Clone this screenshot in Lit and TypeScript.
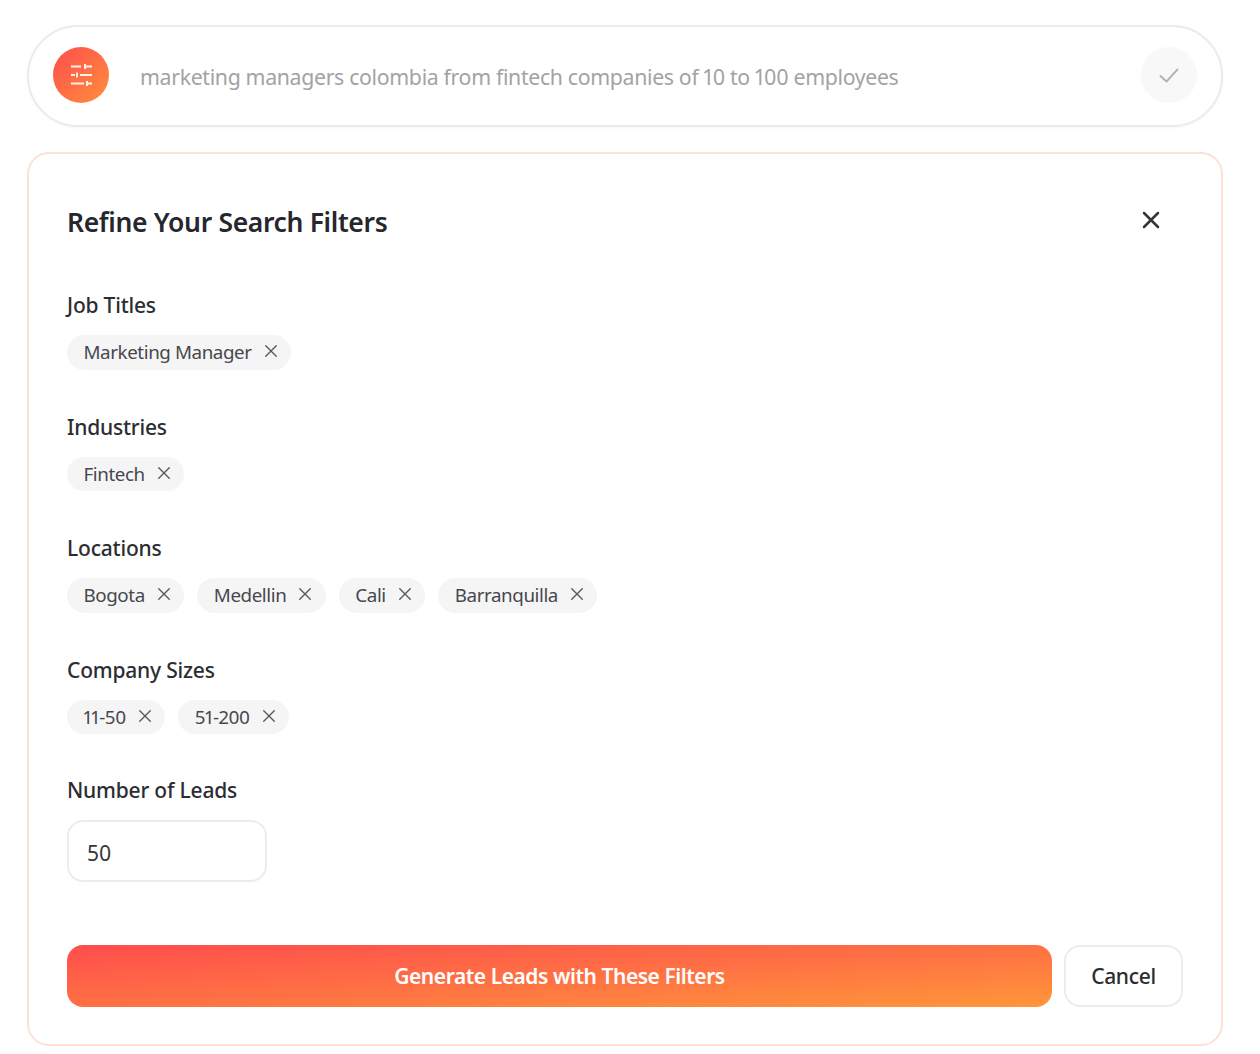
import { LitElement, html, css, svg } from "lit";
import { customElement } from "lit/decorators.js";

const xIcon = (size: number, sw: number) => html`<svg class="x" width=${size} height=${size} viewBox="0 0 24 24" fill="none" stroke="currentColor" stroke-width=${sw} stroke-linecap="round"><path d="M5 5L19 19M19 5L5 19"/></svg>`;

const sections: { label: string; chips: string[] }[] = [
  { label: "Job Titles", chips: ["Marketing Manager"] },
  { label: "Industries", chips: ["Fintech"] },
  { label: "Locations", chips: ["Bogota", "Medellin", "Cali", "Barranquilla"] },
  { label: "Company Sizes", chips: ["11-50", "51-200"] },
];

@customElement("app-root")
export class AppRoot extends LitElement {
  static styles = css`
    :host { display: block; width: 1260px; height: 1054px; background: #fff; overflow: hidden; font-family: "Noto Sans", "Open Sans", sans-serif; font-feature-settings: "pnum"; box-sizing: border-box; padding: 25px 37px 0 27px; color: #2b2d33; }
    * { box-sizing: border-box; }
    .search { height: 102px; border: 2px solid #ebebeb; border-radius: 51px; display: flex; align-items: center; padding: 0 24px 2px; box-shadow: 0 1px 3px rgba(0,0,0,.04); }
    .logo { width: 56px; height: 56px; border-radius: 50%; background: linear-gradient(135deg, #ff4d4d, #ff8f3c); display: flex; align-items: center; justify-content: center; flex: none; }
    .query { flex: 1; margin: 2px 0 0 31px; font-size: 21.3px; letter-spacing: -.34px; color: #a3a3a3; white-space: nowrap; }
    .check { width: 56px; height: 56px; border-radius: 50%; background: #f8f8f8; display: flex; align-items: center; justify-content: center; color: #b4b4b4; flex: none; }
    .card { margin-top: 25px; height: 894px; border: 2px solid #fde0d8; border-radius: 22px; padding: 38px 38px 0; display: flex; flex-direction: column; }
    .head { display: flex; justify-content: space-between; align-items: center; height: 60px; margin-bottom: 38px; }
    h2 { margin: 0; font-size: 26.5px; font-weight: 600; letter-spacing: -.34px; color: #25272d; }
    .close { color: #33353a; display: flex; margin-right: 20px; margin-top: -4px; }
    .section { height: 121.6px; }
    .label { font-size: 21px; font-weight: 500; letter-spacing: -.2px; line-height: 30px; color: #2b2d33; height: 30px; }
    .chips { display: flex; gap: 13px; margin-top: 15px; }
    .chip { height: 34.5px; border-radius: 18px; background: #f5f5f5; display: flex; align-items: center; padding: 0 11.5px 0 16.5px; gap: 10px; font-size: 18.8px; letter-spacing: -.42px; color: #46484e; white-space: nowrap; }
    .x { display: block; flex: none; }
    .chip .x { color: #55575c; margin-top: -2px; }
    .num-label { margin-top: -1px; }
    .input { width: 200px; height: 62px; margin-top: 15px; border: 2px solid #ececec; border-radius: 16px; display: flex; align-items: center; padding: 3px 0 0 18px; font-size: 21px; color: #36383d; }
    .actions { display: flex; gap: 12px; margin-top: 63px; }
    .primary { width: 985px; height: 62px; border-radius: 16px; background: linear-gradient(to bottom right, #ff4d4d 0%, #ff7044 50%, #ff963a 100%); color: #fff; font-size: 21px; font-weight: 600; letter-spacing: -.45px; display: flex; align-items: center; justify-content: center; }
    .cancel { width: 119px; height: 62px; border-radius: 16px; border: 2px solid #ececec; display: flex; align-items: center; justify-content: center; font-size: 21px; font-weight: 500; letter-spacing: -.3px; color: #2b2d33; }
  `;

  render() {
    return html`
      <div class="search">
        <div class="logo">
          <svg width="24" height="24" viewBox="0 0 24 24" fill="none" stroke="#fff" stroke-width="2" opacity=".9">
            ${svg`<path d="M2 3.500H12M15 3.500H23M16 1V6"/><path d="M2 12H6M11 12H23M8 9.500V14.500"/><path d="M2 20.500H15M19 20.500H23M18 18V23"/>`}
          </svg>
        </div>
        <div class="query">marketing managers colombia from fintech companies of 10 to 100 employees</div>
        <div class="check">
          <svg width="24" height="24" viewBox="0 0 24 24" fill="none" stroke="currentColor" stroke-width="2" stroke-linecap="round" stroke-linejoin="round"><path d="M3.500 13L9.500 18.500L20.500 6.500"/></svg>
        </div>
      </div>
      <div class="card">
        <div class="head">
          <h2>Refine Your Search Filters</h2>
          <div class="close">${xIcon(24, 2.5)}</div>
        </div>
        ${sections.map(
          (s) => html`<div class="section">
            <div class="label">${s.label}</div>
            <div class="chips">
              ${s.chips.map((c) => html`<div class="chip">${c}${xIcon(18, 1.8)}</div>`)}
            </div>
          </div>`
        )}
        <div class="label num-label">Number of Leads</div>
        <div class="input">50</div>
        <div class="actions">
          <div class="primary">Generate Leads with These Filters</div>
          <div class="cancel">Cancel</div>
        </div>
      </div>
    `;
  }
}
